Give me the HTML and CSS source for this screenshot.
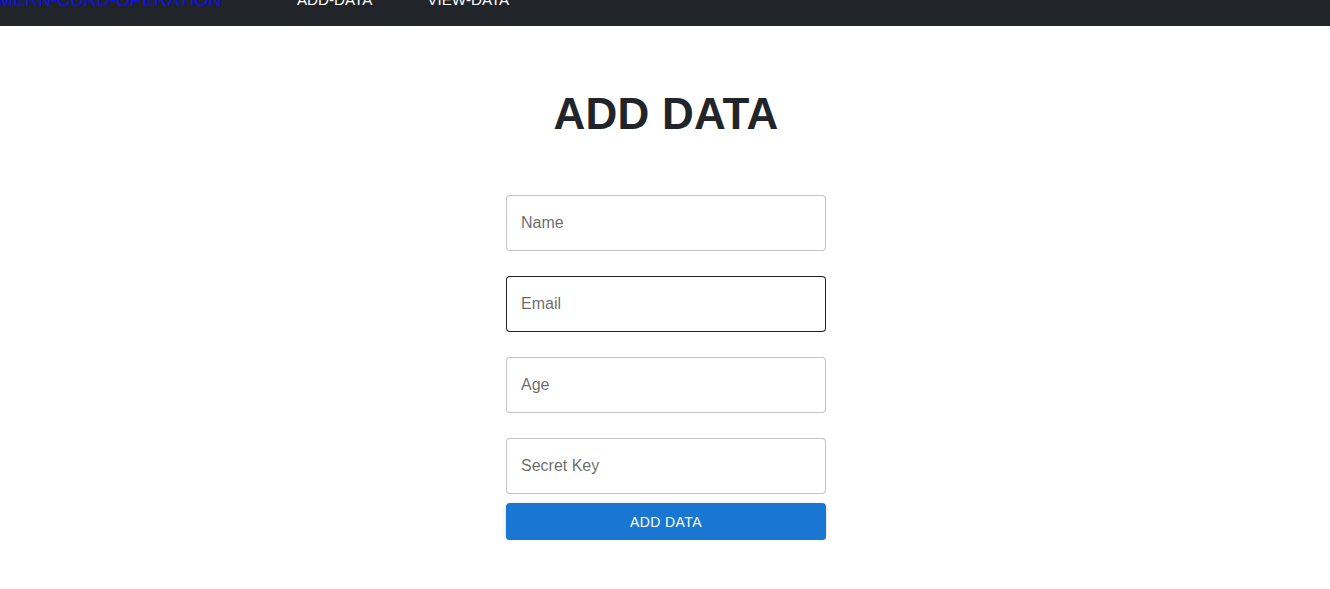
FILE: index.html
```html
<!DOCTYPE html>
<html lang="en">
<head>
<meta charset="utf-8">
<title>Add Data</title>
<link rel="stylesheet" href="styles.css">
</head>
<body>
<nav class="navbar">
  <a class="brand" href="#">MERN-CURD-OPERATION</a>
  <ul class="links">
    <li><a href="#">ADD-DATA</a></li>
    <li><a href="#">VIEW-DATA</a></li>
  </ul>
</nav>
<main class="page">
  <h1 class="title">ADD DATA</h1>
  <form class="form">
    <div class="field"><input type="text" placeholder="Name"></div>
    <div class="field hover"><input type="email" placeholder="Email"></div>
    <div class="field"><input type="text" placeholder="Age"></div>
    <div class="field"><input type="text" placeholder="Secret Key"></div>
    <button type="button" class="btn">ADD DATA</button>
  </form>
</main>
</body>
</html>
```
FILE: styles.css
```css
* { box-sizing: border-box; }
html, body { margin: 0; padding: 0; background: #fff; }
body { font-family: "Liberation Sans", Arial, sans-serif; color: #212529; }

.navbar {
  margin-top: -30px;
  height: 56px;
  background: #212529;
  display: flex;
  align-items: center;
}
.brand {
  font-size: 18.2px;
  color: #0d0df0;
  text-decoration: none;
  margin-left: -2px;
  line-height: 1;
  padding-top: 4px;
}
.links {
  list-style: none;
  margin: 0 0 0 75px;
  padding: 0;
  display: flex;
  gap: 55px;
  padding-top: 4px;
}
.links a {
  color: #fff;
  text-decoration: none;
  font-size: 15.2px;
  line-height: 1;
}

.page {
  display: flex;
  flex-direction: column;
  align-items: center;
  padding-left: 2px;
}
.title {
  margin: 62px 0 0;
  font-size: 44px;
  font-weight: bold;
  letter-spacing: 0.2px;
  line-height: 52px;
  color: #212529;
}
.form {
  margin-top: 55px;
  width: 320px;
  display: flex;
  flex-direction: column;
  gap: 25px;
}
.field input {
  display: block;
  width: 100%;
  height: 56px;
  border: 1px solid rgba(0,0,0,0.23);
  border-radius: 4px;
  padding: 0 14px;
  font-family: "Liberation Sans", Arial, sans-serif;
  font-size: 16px;
  color: rgba(0,0,0,0.87);
  background: #fff;
  outline: none;
}
.field input::placeholder { color: rgba(0,0,0,0.6); }
.field.hover input { border-color: rgba(0,0,0,0.87); }
.btn {
  margin-top: -16px;
  height: 37px;
  width: 100%;
  border: none;
  border-radius: 4px;
  background: #1976d2;
  color: #fff;
  font-family: "Liberation Sans", Arial, sans-serif;
  font-size: 14px;
  letter-spacing: 0.4px;
  box-shadow: 0 3px 1px -2px rgba(0,0,0,0.2), 0 2px 2px 0 rgba(0,0,0,0.14), 0 1px 5px 0 rgba(0,0,0,0.12);
}
```
